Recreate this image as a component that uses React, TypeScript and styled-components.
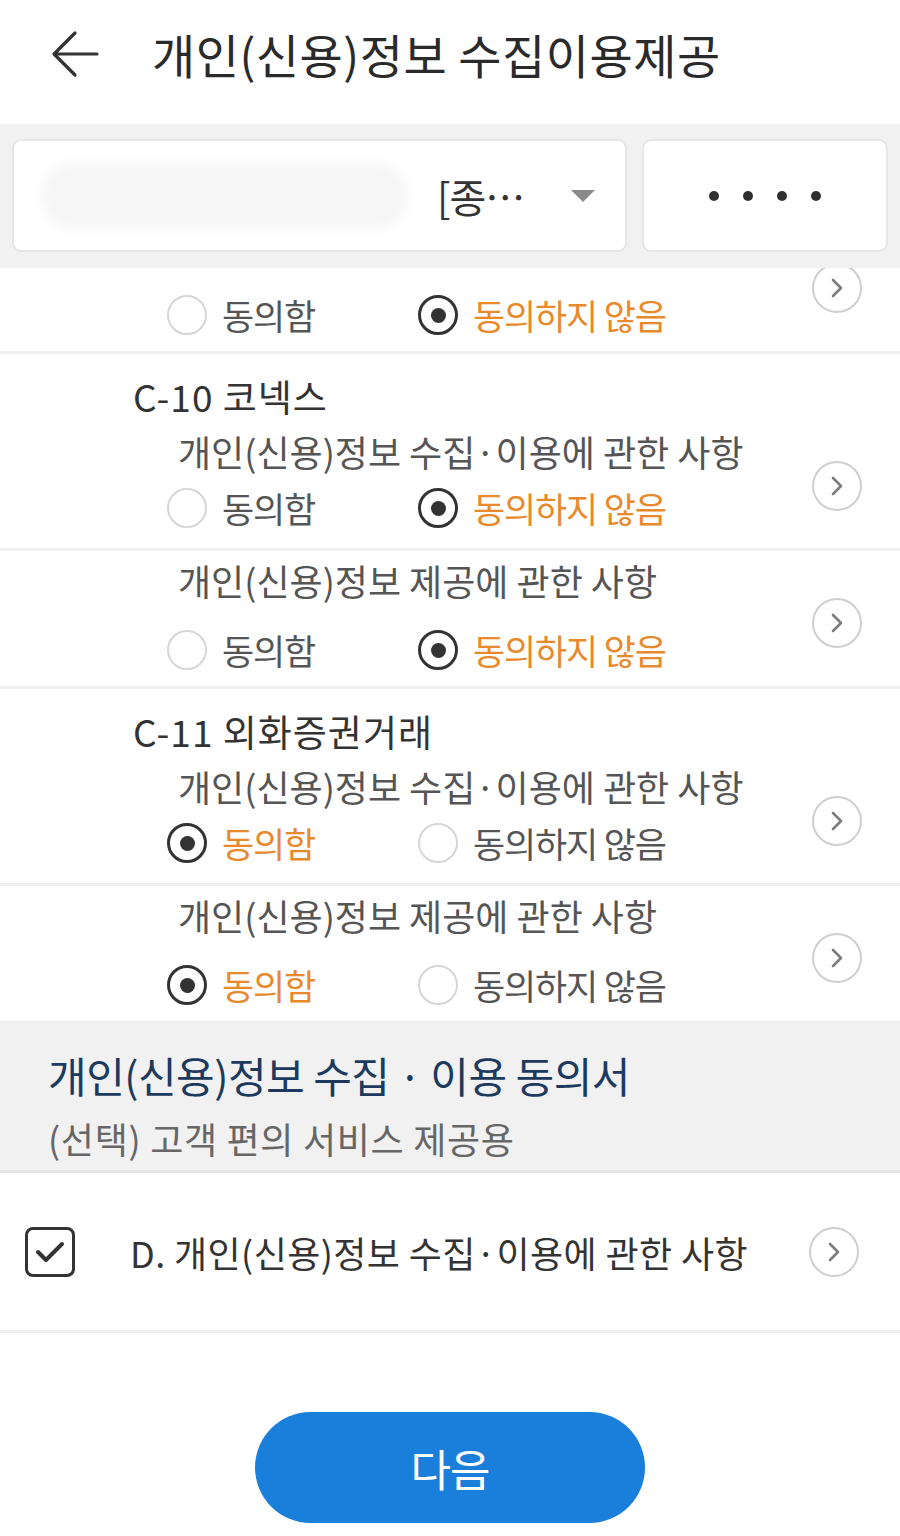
import React from "react";
import styled, { createGlobalStyle } from "styled-components";

const GlobalStyle = createGlobalStyle`
  html, body { margin: 0; padding: 0; background: #ffffff; }
  body { font-family: "Noto Sans CJK KR", "Noto Sans", sans-serif; color: #333; }
  * { box-sizing: border-box; }
`;

const Page = styled.div`
  width: 900px;
  background: #fff;
`;

const Header = styled.header`
  height: 124px;
  display: flex;
  align-items: center;
  padding-left: 50px;
  padding-bottom: 16px;
`;

const BackButton = styled.button`
  border: 0;
  background: none;
  padding: 0;
  width: 50px;
  height: 50px;
  display: flex;
  align-items: center;
  justify-content: center;
  margin-right: 52px;
`;

const Title = styled.h1`
  margin: 0;
  font-size: 47px;
  font-weight: 400;
  letter-spacing: 0.5px;
  color: #2a2a2a;
  line-height: 56px;
`;

const AccountBar = styled.div`
  background: #f1f1f1;
  display: flex;
  gap: 15px;
  padding: 15px 12px 16px 12px;
`;

const Card = styled.div`
  height: 113px;
  background: #fff;
  border: 2px solid #e6e6e6;
  border-radius: 9px;
  display: flex;
  align-items: center;
`;

const SelectBox = styled(Card)`
  width: 615px;
  padding: 0 30px 0 28px;
`;

const MoreBox = styled(Card)`
  flex: 1;
  justify-content: center;
  gap: 24px;
`;

const Masked = styled.span`
  width: 365px;
  height: 66px;
  border-radius: 30px;
  background: #f6f6f6;
  filter: blur(5px);
  margin-right: 30px;
`;

const SelectText = styled.span`
  font-size: 40px;
  color: #333;
  letter-spacing: -1px;
  flex: 1;
`;

const Caret = styled.span`
  width: 0;
  height: 0;
  border-left: 12px solid transparent;
  border-right: 12px solid transparent;
  border-top: 12px solid #8a8a8a;
`;

const Dot = styled.span`
  width: 10px;
  height: 10px;
  border-radius: 50%;
  background: #2f2f2f;
`;

const ListViewport = styled.div`
  height: 756px;
  overflow: hidden;
`;

const List = styled.div`
  margin-top: -52px;
`;

const Item = styled.div<{ $compact?: boolean }>`
  border-bottom: 3px solid #f0f0f0;
  padding: ${(p) => (p.$compact ? "6px 0 12px" : "20px 0 16px")};
`;

const Heading = styled.div`
  padding-left: 133px;
  font-size: 37px;
  line-height: 44px;
  color: #333;
  letter-spacing: 1px;
  margin-bottom: 10px;
`;

const Body = styled.div`
  display: flex;
  align-items: center;
`;

const Texts = styled.div<{ $compact?: boolean }>`
  flex: 1;
  display: flex;
  flex-direction: column;
  gap: ${(p) => (p.$compact ? "23px" : "10px")};
`;

const Subtitle = styled.div`
  padding-left: 178px;
  font-size: 36px;
  line-height: 46px;
  height: 46px;
  color: #555;
  letter-spacing: 0px;
  white-space: nowrap;
`;

const RadioGroup = styled.div`
  padding-left: 167px;
  display: grid;
  grid-template-columns: 251px auto;
  height: 48px;
  align-items: center;
`;

const RadioOption = styled.label`
  display: flex;
  align-items: center;
  gap: 15px;
`;

const RadioCircle = styled.span<{ $checked?: boolean }>`
  width: 40px;
  height: 40px;
  border-radius: 50%;
  border: ${(p) => (p.$checked ? "3.5px solid #333" : "2.5px solid #d6d6d6")};
  display: flex;
  align-items: center;
  justify-content: center;
  &::after {
    content: "";
    width: 15px;
    height: 15px;
    border-radius: 50%;
    background: #333;
    display: ${(p) => (p.$checked ? "block" : "none")};
  }
`;

const RadioLabel = styled.span<{ $checked?: boolean }>`
  font-size: 35px;
  letter-spacing: -1.2px;
  color: ${(p) => (p.$checked ? "#e8892c" : "#555")};
  line-height: 48px;
`;

const ChevronCircle = styled.span<{ $right?: number; $shift?: number }>`
  flex: none;
  width: 50px;
  height: 50px;
  border-radius: 50%;
  border: 2px solid #cfcfcf;
  display: flex;
  align-items: center;
  justify-content: center;
  margin-right: ${(p) => p.$right ?? 38}px;
  margin-top: ${(p) => p.$shift ?? 0}px;
`;

const SectionHead = styled.div`
  background: #f1f1f1;
  padding: 24px 0 9px 48px;
  border-bottom: 3px solid #e6e6e6;
`;

const SectionTitle = styled.h2`
  margin: 0 0 13px;
  font-size: 42px;
  font-weight: 400;
  line-height: 54px;
  letter-spacing: -0.5px;
  color: #1c3a5e;
`;

const SectionSub = styled.div`
  font-size: 36px;
  line-height: 46px;
  color: #666;
  letter-spacing: 0.7px;
`;

const CheckRow = styled.div`
  height: 160px;
  display: flex;
  align-items: center;
  border-bottom: 3px solid #f0f0f0;
  padding-left: 25px;
`;

const CheckBox = styled.span`
  flex: none;
  width: 50px;
  height: 50px;
  border: 3.5px solid #333;
  border-radius: 8px;
  display: flex;
  align-items: center;
  justify-content: center;
`;

const CheckText = styled.span`
  flex: 1;
  margin-left: 55px;
  font-size: 36px;
  letter-spacing: 0.4px;
  color: #333;
  white-space: nowrap;
`;

const Footer = styled.div`
  display: flex;
  justify-content: center;
  padding: 79px 0 20px;
`;

const NextButton = styled.button`
  width: 390px;
  height: 111px;
  border: 0;
  border-radius: 56px;
  background: #1a7fdb;
  color: #fff;
  font-family: "Noto Sans CJK KR", sans-serif;
  font-size: 44px;
  letter-spacing: -1px;
`;

const Chevron = () => (
  <svg width="14" height="22" viewBox="0 0 14 22">
    <path d="M3 3 L11 11 L3 19" fill="none" stroke="#7d7d7d" strokeWidth="2.6" strokeLinecap="round" strokeLinejoin="round" />
  </svg>
);

const Radios = ({ agree }: { agree: boolean }) => (
  <RadioGroup>
    <RadioOption>
      <RadioCircle $checked={agree} />
      <RadioLabel $checked={agree}>동의함</RadioLabel>
    </RadioOption>
    <RadioOption>
      <RadioCircle $checked={!agree} />
      <RadioLabel $checked={!agree}>동의하지 않음</RadioLabel>
    </RadioOption>
  </RadioGroup>
);

type ConsentProps = { heading?: string; subtitle?: string; agree: boolean };

const Consent = ({ heading, subtitle, agree }: ConsentProps) => {
  const compact = !heading;
  return (
    <Item $compact={compact}>
      {heading && <Heading>{heading}</Heading>}
      <Body>
        <Texts $compact={compact}>
          <Subtitle>{subtitle}</Subtitle>
          <Radios agree={agree} />
        </Texts>
        <ChevronCircle $shift={compact ? 15 : 12}>
          <Chevron />
        </ChevronCircle>
      </Body>
    </Item>
  );
};

const COLLECT = "개인(신용)정보 수집·이용에 관한 사항";
const PROVIDE = "개인(신용)정보 제공에 관한 사항";

// first item is scrolled partly out of view; its title line lies above the viewport
const items: ConsentProps[] = [
  { agree: false },
  { heading: "C-10 코넥스", subtitle: COLLECT, agree: false },
  { subtitle: PROVIDE, agree: false },
  { heading: "C-11 외화증권거래", subtitle: COLLECT, agree: true },
  { subtitle: PROVIDE, agree: true },
];

export default function App() {
  return (
    <Page>
      <GlobalStyle />
      <Header>
        <BackButton aria-label="뒤로">
          <svg width="48" height="48" viewBox="0 0 48 48">
            <path d="M46 24 H4 M24 3 L3 24 L24 45" fill="none" stroke="#333" strokeWidth="3.2" strokeLinecap="round" strokeLinejoin="round" />
          </svg>
        </BackButton>
        <Title>개인(신용)정보 수집이용제공</Title>
      </Header>
      <AccountBar>
        <SelectBox>
          <Masked />
          <SelectText>[종…</SelectText>
          <Caret />
        </SelectBox>
        <MoreBox>
          <Dot />
          <Dot />
          <Dot />
          <Dot />
        </MoreBox>
      </AccountBar>
      <ListViewport>
        <List>
          {items.map((it, i) => (
            <Consent key={i} {...it} />
          ))}
        </List>
      </ListViewport>
      <SectionHead>
        <SectionTitle>개인(신용)정보 수집 · 이용 동의서</SectionTitle>
        <SectionSub>(선택) 고객 편의 서비스 제공용</SectionSub>
      </SectionHead>
      <CheckRow>
        <CheckBox>
          <svg width="32" height="28" viewBox="0 0 32 28">
            <path d="M4 14 L12 22 L28 6" fill="none" stroke="#333" strokeWidth="4" strokeLinecap="round" strokeLinejoin="round" />
          </svg>
        </CheckBox>
        <CheckText>D. 개인(신용)정보 수집·이용에 관한 사항</CheckText>
        <ChevronCircle $right={41}>
          <Chevron />
        </ChevronCircle>
      </CheckRow>
      <Footer>
        <NextButton>다음</NextButton>
      </Footer>
    </Page>
  );
}
